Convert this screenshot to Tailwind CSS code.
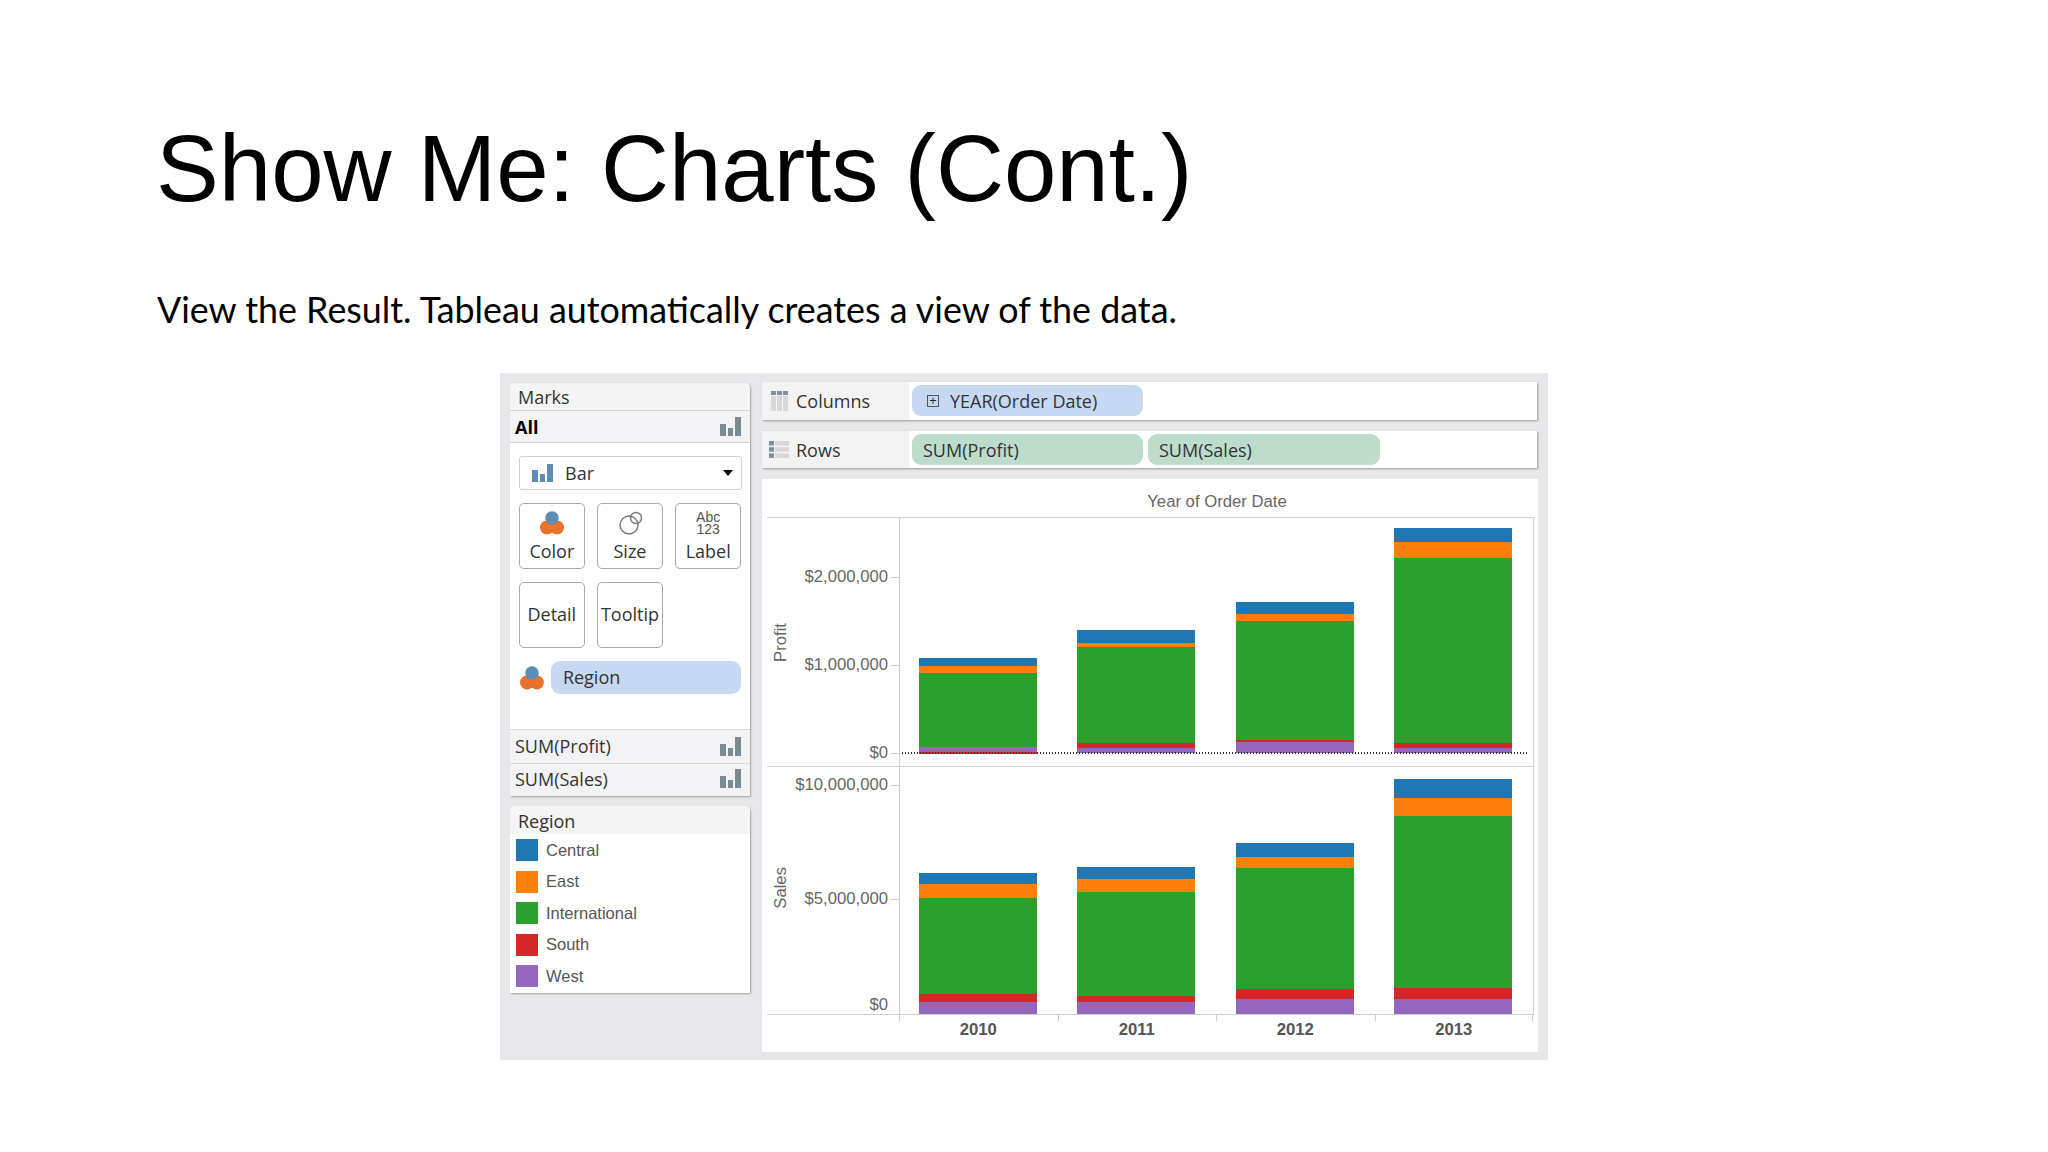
<!DOCTYPE html>
<html lang="en">
<head>
<meta charset="UTF-8">
<script src="https://cdn.jsdelivr.net/npm/@tailwindcss/browser@4"></script>
<title>Show Me: Charts (Cont.)</title>
</head>
<body class="bg-white w-[2048px] h-[1152px] overflow-hidden">
  <!-- Slide title -->
  <h1 class="pt-[115px] pl-[156px] text-[94.2px] leading-[108px] text-black font-['Liberation_Sans',sans-serif]">Show Me: Charts (Cont.)</h1>
  <p class="mt-[67px] pl-[157px] text-[35.85px] leading-[40px] text-black font-['Lato',sans-serif]">View the Result. Tableau automatically creates a view of the data.</p>

  <!-- Tableau window -->
  <div class="ml-[500px] mt-[43px] w-[1048px] h-[687px] bg-[#e8e8ea] flex gap-[12px] pl-[10px] pt-[9px] font-['Open_Sans',sans-serif] text-[#333] text-[18px]">

    <!-- Left column -->
    <div class="w-[240px] flex flex-col gap-[10px] pt-px">
      <!-- Marks -->
      <div class="h-[413px] bg-white rounded-t-[5px] shadow-[1px_1px_2px_rgba(0,0,0,0.3)] flex flex-col">
        <div class="h-[28px] bg-[#f5f5f5] rounded-t-[5px] border-b border-[#d4d4d4] pl-[8px] pt-px flex items-center">Marks</div>
        <div class="h-[32px] bg-[#f3f3f5] border-b border-[#d4d4d4] pl-[5px] pr-[9px] pt-px flex items-center justify-between">
          <span class="font-bold text-black">All</span>
          <svg class="w-[21px] h-[20px]" viewBox="0 0 21 20" fill="#7c8a94"><rect x="0" y="7" width="6" height="12"/><rect x="8" y="11" width="5" height="8"/><rect x="15" y="0" width="6" height="19"/></svg>
        </div>
        <div class="flex-1 px-[9px] pt-[13px]">
          <div class="h-[34px] w-[223px] border border-[#d0d0d0] rounded-[3px] flex items-center pl-[12px] pr-[8px]">
            <svg class="w-[21px] h-[19px]" viewBox="0 0 21 19" fill="#5f8cb0"><rect x="0" y="6" width="6" height="12"/><rect x="8" y="10" width="5" height="8"/><rect x="15" y="0" width="6" height="18"/></svg>
            <span class="ml-[12px] flex-1">Bar</span>
            <span class="w-0 h-0 border-x-[5px] border-x-transparent border-t-[6px] border-t-black"></span>
          </div>
          <div class="mt-[13px] grid grid-cols-3 gap-x-[12.5px] gap-y-[13px]">
            <div class="h-[66px] border border-[#aaa] rounded-[5px] flex flex-col items-center pt-[7px]">
              <svg class="w-[24px] h-[24px]" viewBox="0 0 24 24"><circle cx="7" cy="16.5" r="7" fill="#e8722a"/><circle cx="17" cy="16.5" r="7" fill="#e8722a"/><circle cx="12" cy="7" r="6.8" fill="#5b8db5"/></svg>
              <span class="mt-[5px] leading-[22px]">Color</span>
            </div>
            <div class="h-[66px] border border-[#aaa] rounded-[5px] flex flex-col items-center pt-[7px]">
              <svg class="w-[24px] h-[24px]" viewBox="0 0 24 24" fill="none" stroke="#777" stroke-width="1.4"><circle cx="11" cy="14" r="9"/><circle cx="18" cy="7" r="5.5"/></svg>
              <span class="mt-[5px] leading-[22px]">Size</span>
            </div>
            <div class="h-[66px] border border-[#aaa] rounded-[5px] flex flex-col items-center pt-[7px]">
              <div class="h-[24px] text-[14px] leading-[12px] text-center text-[#555] font-['Liberation_Sans',sans-serif]">Abc<br>123</div>
              <span class="mt-[5px] leading-[22px]">Label</span>
            </div>
            <div class="h-[66px] border border-[#aaa] rounded-[5px] pb-[2px] flex items-center justify-center">Detail</div>
            <div class="h-[66px] border border-[#aaa] rounded-[5px] pb-[2px] flex items-center justify-center">Tooltip</div>
          </div>
          <div class="mt-[13px] flex items-center">
            <svg class="w-[24px] h-[24px] ml-px" viewBox="0 0 24 24"><circle cx="7" cy="16.5" r="7" fill="#e8722a"/><circle cx="17" cy="16.5" r="7" fill="#e8722a"/><circle cx="12" cy="7" r="6.8" fill="#5b8db5"/></svg>
            <div class="ml-[7px] w-[191px] h-[33px] bg-[#c6d8f2] rounded-[9px] pl-[12px] flex items-center">Region</div>
          </div>
        </div>
        <div class="h-[34px] bg-[#f3f3f5] border-t border-[#d8d8d8] pl-[5px] pr-[9px] flex items-center justify-between">
          <span>SUM(Profit)</span>
          <svg class="w-[21px] h-[20px]" viewBox="0 0 21 20" fill="#7c8a94"><rect x="0" y="7" width="6" height="12"/><rect x="8" y="11" width="5" height="8"/><rect x="15" y="0" width="6" height="19"/></svg>
        </div>
        <div class="h-[33px] bg-[#f3f3f5] border-t border-[#d8d8d8] pl-[5px] pr-[9px] pb-[2px] flex items-center justify-between">
          <span>SUM(Sales)</span>
          <svg class="w-[21px] h-[20px]" viewBox="0 0 21 20" fill="#7c8a94"><rect x="0" y="7" width="6" height="12"/><rect x="8" y="11" width="5" height="8"/><rect x="15" y="0" width="6" height="19"/></svg>
        </div>
      </div>
      <!-- Region legend -->
      <div class="h-[187px] bg-white rounded-t-[5px] shadow-[1px_1px_2px_rgba(0,0,0,0.3)]">
        <div class="h-[28px] bg-[#f5f5f5] rounded-t-[5px] pl-[8px] pt-[2px] flex items-center">Region</div>
        <div class="pt-[5px] pl-[6px] flex flex-col gap-[9.5px] text-[16.5px] font-['Liberation_Sans',sans-serif] text-[#555]">
          <div class="flex items-center h-[22px]"><span class="w-[22px] h-[22px] bg-[#1f77b4]"></span><span class="ml-[8px]">Central</span></div>
          <div class="flex items-center h-[22px]"><span class="w-[22px] h-[22px] bg-[#ff7f0e]"></span><span class="ml-[8px]">East</span></div>
          <div class="flex items-center h-[22px]"><span class="w-[22px] h-[22px] bg-[#2ca02c]"></span><span class="ml-[8px]">International</span></div>
          <div class="flex items-center h-[22px]"><span class="w-[22px] h-[22px] bg-[#d62728]"></span><span class="ml-[8px]">South</span></div>
          <div class="flex items-center h-[22px]"><span class="w-[22px] h-[22px] bg-[#9467bd]"></span><span class="ml-[8px]">West</span></div>
        </div>
      </div>
    </div>

    <!-- Right column -->
    <div class="w-[776px] flex flex-col">
      <!-- Columns shelf -->
      <div class="h-[38px] w-[775px] bg-white shadow-[1px_1px_2px_rgba(0,0,0,0.35)] flex">
        <div class="w-[147px] bg-[#f3f3f3] flex items-center pl-[9px]">
          <svg class="w-[17px] h-[20px]" viewBox="0 0 17 20"><g fill="#7f8f9f"><rect x="0" y="0" width="5" height="4"/><rect x="6" y="0" width="5" height="4"/><rect x="12" y="0" width="5" height="4"/></g><g fill="#d8d8d8"><rect x="0" y="5" width="5" height="15"/><rect x="6" y="5" width="5" height="15"/><rect x="12" y="5" width="5" height="15"/></g></svg>
          <span class="ml-[8px] mt-px">Columns</span>
        </div>
        <div class="pl-[3px] pt-[3px]">
          <div class="w-[231px] h-[31px] bg-[#c6d8f2] rounded-[9px] pl-[15px] flex items-center">
            <span class="w-[12px] h-[12px] border border-[#555] flex items-center justify-center text-[13px] leading-none text-[#222]">+</span>
            <span class="ml-[11px] mt-[2px]">YEAR(Order Date)</span>
          </div>
        </div>
      </div>
      <!-- Rows shelf -->
      <div class="mt-[11px] h-[37px] w-[775px] bg-white shadow-[1px_1px_2px_rgba(0,0,0,0.35)] flex">
        <div class="w-[147px] bg-[#f3f3f3] flex items-center pl-[7px]">
          <svg class="w-[20px] h-[17px]" viewBox="0 0 20 17"><g fill="#7f8f9f"><rect x="0" y="0" width="5" height="4.5"/><rect x="0" y="6.2" width="5" height="4.5"/><rect x="0" y="12.4" width="5" height="4.5"/></g><g fill="#d8d8d8"><rect x="6" y="0" width="14" height="4.5"/><rect x="6" y="6.2" width="14" height="4.5"/><rect x="6" y="12.4" width="14" height="4.5"/></g></svg>
          <span class="ml-[7px] mt-px">Rows</span>
        </div>
        <div class="pl-[3px] pt-[3px] flex gap-[5px]">
          <div class="w-[231px] h-[31px] bg-[#bddccb] rounded-[9px] pl-[11px] pt-[2px] flex items-center">SUM(Profit)</div>
          <div class="w-[232px] h-[31px] bg-[#bddccb] rounded-[9px] pl-[11px] pt-[2px] flex items-center">SUM(Sales)</div>
        </div>
      </div>

      <!-- Chart -->
      <div class="mt-[11px] h-[573px] bg-white pl-[5px] pr-[4px] text-[16.7px] font-['Liberation_Sans',sans-serif] text-[#666]">
        <div class="h-[38px] pl-[133px] pt-[8px] flex items-center justify-center">Year of Order Date</div>

        <!-- Profit pane -->
        <div class="relative h-[250px] border-t border-b border-r border-[#d0d0d0] flex">
          <div class="w-[133px] border-r border-[#d0d0d0] flex shrink-0">
            <div class="w-[28px] flex items-center justify-center"><span class="[writing-mode:vertical-rl] rotate-180">Profit</span></div>
            <div class="flex-1 pt-[47px] flex flex-col gap-[64px]">
              <div class="h-[24px] flex items-center justify-end"><span>$2,000,000</span><span class="ml-[3px] w-[8px] h-px bg-[#ccc]"></span></div>
              <div class="h-[24px] flex items-center justify-end"><span>$1,000,000</span><span class="ml-[3px] w-[8px] h-px bg-[#ccc]"></span></div>
              <div class="h-[24px] flex items-center justify-end"><span>$0</span><span class="ml-[3px] w-[8px] h-px bg-[#ccc]"></span></div>
            </div>
          </div>
          <div class="flex-1 -ml-px pr-px grid grid-cols-4 pb-[12px]">
            <div class="flex flex-col justify-end items-center">
              <div class="w-[118px] h-[8px] bg-[#1f77b4]"></div><div class="w-[118px] h-[7px] bg-[#ff7f0e]"></div><div class="w-[118px] h-[74px] bg-[#2ca02c]"></div><div class="w-[118px] h-[5px] bg-[#9467bd]"></div><div class="w-[118px] h-[2px] bg-[#d62728]"></div>
            </div>
            <div class="flex flex-col justify-end items-center pb-px">
              <div class="w-[118px] h-[13px] bg-[#1f77b4]"></div><div class="w-[118px] h-[4px] bg-[#ff7f0e]"></div><div class="w-[118px] h-[96px] bg-[#2ca02c]"></div><div class="w-[118px] h-[5px] bg-[#d62728]"></div><div class="w-[118px] h-[5px] bg-[#9467bd]"></div>
            </div>
            <div class="flex flex-col justify-end items-center pb-px">
              <div class="w-[118px] h-[12px] bg-[#1f77b4]"></div><div class="w-[118px] h-[7px] bg-[#ff7f0e]"></div><div class="w-[118px] h-[119px] bg-[#2ca02c]"></div><div class="w-[118px] h-[2px] bg-[#d62728]"></div><div class="w-[118px] h-[11px] bg-[#9467bd]"></div>
            </div>
            <div class="flex flex-col justify-end items-center pb-px">
              <div class="w-[118px] h-[14px] bg-[#1f77b4]"></div><div class="w-[118px] h-[16px] bg-[#ff7f0e]"></div><div class="w-[118px] h-[185px] bg-[#2ca02c]"></div><div class="w-[118px] h-[5px] bg-[#d62728]"></div><div class="w-[118px] h-[5px] bg-[#9467bd]"></div>
            </div>
          </div>
          <!-- zero line over the bars -->
          <div class="absolute left-[135px] right-[4px] bottom-[12px] h-[2px] bg-[repeating-linear-gradient(90deg,#333_0_1.5px,transparent_1.5px_3px)]"></div>
        </div>

        <!-- Sales pane -->
        <div class="h-[248px] border-b border-r border-[#d0d0d0] flex">
          <div class="w-[133px] border-r border-[#d0d0d0] flex shrink-0">
            <div class="w-[28px] flex items-center justify-center pb-[6px]"><span class="[writing-mode:vertical-rl] rotate-180">Sales</span></div>
            <div class="flex-1 pt-[8px] flex flex-col">
              <div class="h-[20px] flex items-center justify-end"><span>$10,000,000</span><span class="ml-[3px] w-[8px] h-px bg-[#ccc]"></span></div>
              <div class="mt-[94px] h-[20px] flex items-center justify-end"><span>$5,000,000</span><span class="ml-[3px] w-[8px] h-px bg-[#ccc]"></span></div>
              <div class="mt-[86px] h-[20px] flex items-center justify-end pr-[11px]"><span>$0</span></div>
            </div>
          </div>
          <div class="flex-1 -ml-px pr-px grid grid-cols-4">
            <div class="flex flex-col justify-end items-center">
              <div class="w-[118px] h-[11px] bg-[#1f77b4]"></div><div class="w-[118px] h-[14px] bg-[#ff7f0e]"></div><div class="w-[118px] h-[96px] bg-[#2ca02c]"></div><div class="w-[118px] h-[8px] bg-[#d62728]"></div><div class="w-[118px] h-[12px] bg-[#9467bd]"></div>
            </div>
            <div class="flex flex-col justify-end items-center">
              <div class="w-[118px] h-[12px] bg-[#1f77b4]"></div><div class="w-[118px] h-[13px] bg-[#ff7f0e]"></div><div class="w-[118px] h-[104px] bg-[#2ca02c]"></div><div class="w-[118px] h-[6px] bg-[#d62728]"></div><div class="w-[118px] h-[12px] bg-[#9467bd]"></div>
            </div>
            <div class="flex flex-col justify-end items-center">
              <div class="w-[118px] h-[14px] bg-[#1f77b4]"></div><div class="w-[118px] h-[11px] bg-[#ff7f0e]"></div><div class="w-[118px] h-[121px] bg-[#2ca02c]"></div><div class="w-[118px] h-[10px] bg-[#d62728]"></div><div class="w-[118px] h-[15px] bg-[#9467bd]"></div>
            </div>
            <div class="flex flex-col justify-end items-center">
              <div class="w-[118px] h-[19px] bg-[#1f77b4]"></div><div class="w-[118px] h-[18px] bg-[#ff7f0e]"></div><div class="w-[118px] h-[172px] bg-[#2ca02c]"></div><div class="w-[118px] h-[11px] bg-[#d62728]"></div><div class="w-[118px] h-[15px] bg-[#9467bd]"></div>
            </div>
          </div>
        </div>

        <!-- Year axis -->
        <div class="flex pl-[132px] pr-[1px]">
          <div class="flex-1 grid grid-cols-4 font-bold text-[#555]">
            <div><div class="h-[6px] border-l border-[#ccc]"></div><div class="text-center leading-[18px]">2010</div></div>
            <div><div class="h-[6px] border-l border-[#ccc]"></div><div class="text-center leading-[18px]">2011</div></div>
            <div><div class="h-[6px] border-l border-[#ccc]"></div><div class="text-center leading-[18px]">2012</div></div>
            <div><div class="h-[6px] border-x border-[#ccc]"></div><div class="text-center leading-[18px]">2013</div></div>
          </div>
        </div>
      </div>
    </div>
  </div>
</body>
</html>
